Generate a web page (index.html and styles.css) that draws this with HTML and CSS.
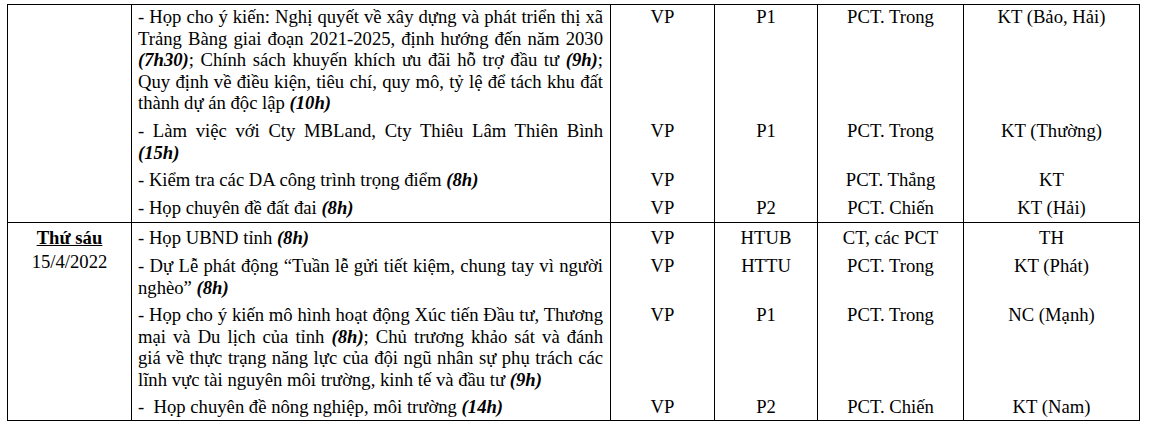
FILE: index.html
```html
<!DOCTYPE html>
<html lang="vi">
<head>
<meta charset="utf-8">
<title>Lịch làm việc</title>
<link rel="stylesheet" href="styles.css">
</head>
<body>
<table class="schedule">
  <colgroup>
    <col class="w-day">
    <col class="w-task">
    <col class="w-org">
    <col class="w-room">
    <col class="w-lead">
    <col class="w-prep">
  </colgroup>
  <tbody class="group">
    <tr class="item">
      <td class="day" rowspan="4"></td>
      <td class="task">
        <span class="ln">- Họp cho ý kiến: Nghị quyết về xây dựng và phát triển thị xã</span>
        <span class="ln">Trảng Bàng giai đoạn 2021-2025, định hướng đến năm 2030</span>
        <span class="ln"><b class="time">(7h30)</b>; Chính sách khuyến khích ưu đãi hỗ trợ đầu tư <b class="time">(9h)</b>;</span>
        <span class="ln">Quy định về điều kiện, tiêu chí, quy mô, tỷ lệ để tách khu đất</span>
        <span class="ln">thành dự án độc lập <b class="time">(10h)</b></span>
      </td>
      <td class="c">VP</td>
      <td class="c">P1</td>
      <td class="c">PCT. Trong</td>
      <td class="c">KT (Bảo, Hải)</td>
    </tr>
    <tr class="item">
      <td class="task">
        <span class="ln">- Làm việc với Cty MBLand, Cty Thiêu Lâm Thiên Bình</span>
        <span class="ln"><b class="time">(15h)</b></span>
      </td>
      <td class="c">VP</td>
      <td class="c">P1</td>
      <td class="c">PCT. Trong</td>
      <td class="c">KT (Thường)</td>
    </tr>
    <tr class="item">
      <td class="task">
        <span class="ln">- Kiểm tra các DA công trình trọng điểm <b class="time">(8h)</b></span>
      </td>
      <td class="c">VP</td>
      <td class="c"></td>
      <td class="c">PCT. Thắng</td>
      <td class="c">KT</td>
    </tr>
    <tr class="item tail">
      <td class="task">
        <span class="ln">- Họp chuyên đề đất đai <b class="time">(8h)</b></span>
      </td>
      <td class="c">VP</td>
      <td class="c">P2</td>
      <td class="c">PCT. Chiến</td>
      <td class="c">KT (Hải)</td>
    </tr>
  </tbody>
  <tbody class="group">
    <tr class="item lead">
      <td class="day" rowspan="4">
        <div class="day-name">Thứ sáu</div>
        <div class="day-date">15/4/2022</div>
      </td>
      <td class="task">
        <span class="ln">- Họp UBND tỉnh <b class="time">(8h)</b></span>
      </td>
      <td class="c">VP</td>
      <td class="c">HTUB</td>
      <td class="c">CT, các PCT</td>
      <td class="c">TH</td>
    </tr>
    <tr class="item">
      <td class="task">
        <span class="ln">- Dự Lễ phát động “Tuần lễ gửi tiết kiệm, chung tay vì người</span>
        <span class="ln">nghèo” <b class="time">(8h)</b></span>
      </td>
      <td class="c">VP</td>
      <td class="c">HTTU</td>
      <td class="c">PCT. Trong</td>
      <td class="c">KT (Phát)</td>
    </tr>
    <tr class="item">
      <td class="task">
        <span class="ln">- Họp cho ý kiến mô hình hoạt động Xúc tiến Đầu tư, Thương</span>
        <span class="ln">mại và Du lịch của tỉnh <b class="time">(8h)</b>; Chủ trương khảo sát và đánh</span>
        <span class="ln">giá về thực trạng năng lực của đội ngũ nhân sự phụ trách các</span>
        <span class="ln">lĩnh vực tài nguyên môi trường, kinh tế và đầu tư <b class="time">(9h)</b></span>
      </td>
      <td class="c">VP</td>
      <td class="c">P1</td>
      <td class="c">PCT. Trong</td>
      <td class="c">NC (Mạnh)</td>
    </tr>
    <tr class="item end">
      <td class="task">
        <span class="ln">-&nbsp; Họp chuyên đề nông nghiệp, môi trường <b class="time">(14h)</b></span>
      </td>
      <td class="c">VP</td>
      <td class="c">P2</td>
      <td class="c">PCT. Chiến</td>
      <td class="c">KT (Nam)</td>
    </tr>
  </tbody>
</table>
</body>
</html>
```
FILE: styles.css
```css
html, body {
  margin: 0;
  padding: 0;
  background: #fff;
}

body {
  font-family: "Liberation Serif", "Times New Roman", serif;
  font-size: 18.67px;
  line-height: 21.6px;
  color: #000;
}

.schedule {
  margin: 4px 0 0 7px;
  width: 1133px;
  table-layout: fixed;
  border-collapse: collapse;
  border: 1px solid #000;
}

.w-day { width: 124px; }
.w-task { width: 479px; }
.w-org { width: 104px; }
.w-room { width: 103px; }
.w-lead { width: 146px; }
.w-prep { width: 176px; }

.group {
  border-top: 1px solid #000;
  border-bottom: 1px solid #000;
}

.schedule td {
  border-left: 1px solid #000;
  border-right: 1px solid #000;
  vertical-align: top;
  padding: 1px 6px 5px 6px;
}

.item.tail td {
  padding-bottom: 4px;
}

.item.lead td {
  padding-top: 4px;
}

.item.end td {
  padding-top: 0;
  padding-bottom: 3px;
}

.schedule td.task {
  padding-right: 7px;
}

.task .ln {
  display: block;
  text-align: justify;
  text-align-last: justify;
}

.task .ln:last-child {
  text-align-last: auto;
}

.schedule td.c {
  text-align: center;
}

.schedule td.day {
  text-align: center;
}

.day-name {
  font-weight: bold;
  text-decoration: underline;
}

.day-date {
  margin-top: 2px;
}

.time {
  font-weight: bold;
  font-style: italic;
}
```
